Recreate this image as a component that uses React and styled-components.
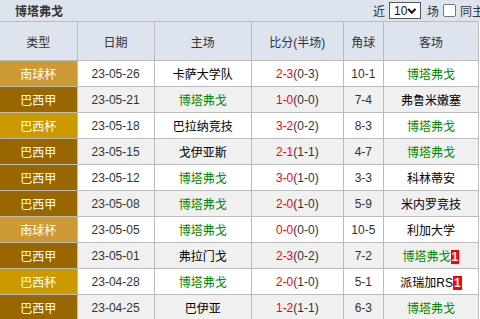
import React from "react";
import styled, { createGlobalStyle } from "styled-components";

const GlobalStyle = createGlobalStyle`
  html, body {
    margin: 0;
    padding: 0;
    background: #fff;
    overflow: hidden;
  }
  body {
    font-family: "Liberation Sans", "Noto Sans CJK SC", sans-serif;
    font-size: 12px;
    color: #333;
  }
`;

const TYPE_COLORS = {
  南球杯: "#cc9933",
  巴西甲: "#996600",
  巴西杯: "#cc9900",
};

const TEAM = "博塔弗戈";

const matches = [
  ["南球杯", "23-05-26", "卡萨大学队", "2-3", "0-3", "10-1", TEAM],
  ["巴西甲", "23-05-21", TEAM, "1-0", "0-0", "7-4", "弗鲁米嫩塞"],
  ["巴西杯", "23-05-18", "巴拉纳竞技", "3-2", "0-2", "8-3", TEAM],
  ["巴西甲", "23-05-15", "戈伊亚斯", "2-1", "1-1", "4-7", TEAM],
  ["巴西甲", "23-05-12", TEAM, "3-0", "1-0", "3-3", "科林蒂安"],
  ["巴西甲", "23-05-08", TEAM, "2-0", "1-0", "5-9", "米内罗竞技"],
  ["南球杯", "23-05-05", TEAM, "0-0", "0-0", "10-5", "利加大学"],
  ["巴西甲", "23-05-01", "弗拉门戈", "2-3", "0-2", "7-2", TEAM, 1],
  ["巴西杯", "23-04-28", TEAM, "2-0", "1-0", "5-1", "派瑞加RS", 1],
  ["巴西甲", "23-04-25", "巴伊亚", "1-2", "1-1", "6-3", TEAM],
];

const App = () => {
  return (
    <Wrapper>
      <GlobalStyle />
      <TitleBar>
        <Title>博塔弗戈</Title>
        <Controls>
          近
          <FakeSelect>
            10
            <svg width="10" height="8" viewBox="0 0 10 8">
              <path
                d="M1.2 1.8 L5 5.8 L8.8 1.8"
                fill="none"
                stroke="#111"
                strokeWidth="2.2"
              />
            </svg>
          </FakeSelect>
          场
          <Check />
          同主场
        </Controls>
      </TitleBar>

      <Table>
        <colgroup>
          <col style={{ width: 77 }} />
          <col style={{ width: 77 }} />
          <col style={{ width: 97 }} />
          <col style={{ width: 92 }} />
          <col style={{ width: 40 }} />
          <col style={{ width: 95 }} />
        </colgroup>
        <thead>
          <tr>
            <Th>类型</Th>
            <Th>日期</Th>
            <Th>主场</Th>
            <Th>比分(半场)</Th>
            <Th>角球</Th>
            <Th>客场</Th>
          </tr>
        </thead>
        <tbody>
          {matches.map((m, i) => {
            const [type, date, home, score, half, corner, away, badge] = m;
            return (
              <Row key={i} $alt={i % 2 === 1}>
                <TypeCell $bg={TYPE_COLORS[type]}>{type}</TypeCell>
                <Td>{date}</Td>
                <Td>
                  <Team $own={home === TEAM}>{home}</Team>
                </Td>
                <Td>
                  <Score>{score}</Score>({half})
                </Td>
                <Td>{corner}</Td>
                <Td>
                  <Team $own={away === TEAM}>{away}</Team>
                  {badge && <Badge>{badge}</Badge>}
                </Td>
              </Row>
            );
          })}
        </tbody>
      </Table>
    </Wrapper>
  );
};

const Wrapper = styled.div`
  width: 480px;
  overflow: hidden;
`;

const TitleBar = styled.div`
  height: 21px;
  background: #dde4ee;
  display: flex;
  align-items: center;
  white-space: nowrap;
  overflow: hidden;
`;

const Title = styled.div`
  flex: 0 0 358px;
  padding-left: 15px;
  font-weight: bold;
  color: #333;
`;

const Controls = styled.div`
  display: flex;
  align-items: center;
  color: #333;
  font-size: 12px;
`;

const FakeSelect = styled.span`
  display: inline-flex;
  align-items: center;
  justify-content: space-between;
  box-sizing: border-box;
  width: 32px;
  height: 17px;
  margin: 0 6px 0 4px;
  padding: 0 3px 0 4px;
  border: 1px solid #555;
  background: #fff;
  color: #111;
  font-size: 12px;
`;

const Check = styled.span`
  display: inline-block;
  box-sizing: border-box;
  width: 13px;
  height: 13px;
  margin: 0 4px 0 4px;
  border: 1px solid #767676;
  border-radius: 2px;
  background: #fff;
`;

const Table = styled.table`
  width: 479px;
  table-layout: fixed;
  border-collapse: collapse;
  border-top: 1px solid #bbb;
  border-right: 1px solid #bbb;
`;

const Th = styled.th`
  height: 38px;
  padding: 0;
  background: #dde4ee;
  border: 1px solid #bbb;
  border-top: none;
  font-weight: normal;
  color: #333;
  text-align: center;
  &:first-child {
    border-left: none;
  }
`;

const Row = styled.tr`
  background: ${(p) => (p.$alt ? "#f0f0f0" : "#fff")};
`;

const Td = styled.td`
  height: 25px;
  padding: 0;
  border: 1px solid #bbb;
  text-align: center;
  white-space: nowrap;
  color: #333;
`;

const TypeCell = styled(Td)`
  background: ${(p) => p.$bg};
  color: #fff;
  border-left: none;
`;

const Team = styled.span`
  color: ${(p) => (p.$own ? "#008800" : "#000")};
`;

const Score = styled.span`
  color: #ff0000;
`;

const Badge = styled.span`
  display: inline-block;
  padding: 0 1px;
  line-height: 14px;
  background: #ff0000;
  color: #fff;
  font-weight: bold;
  font-size: 12px;
`;

export default App;
